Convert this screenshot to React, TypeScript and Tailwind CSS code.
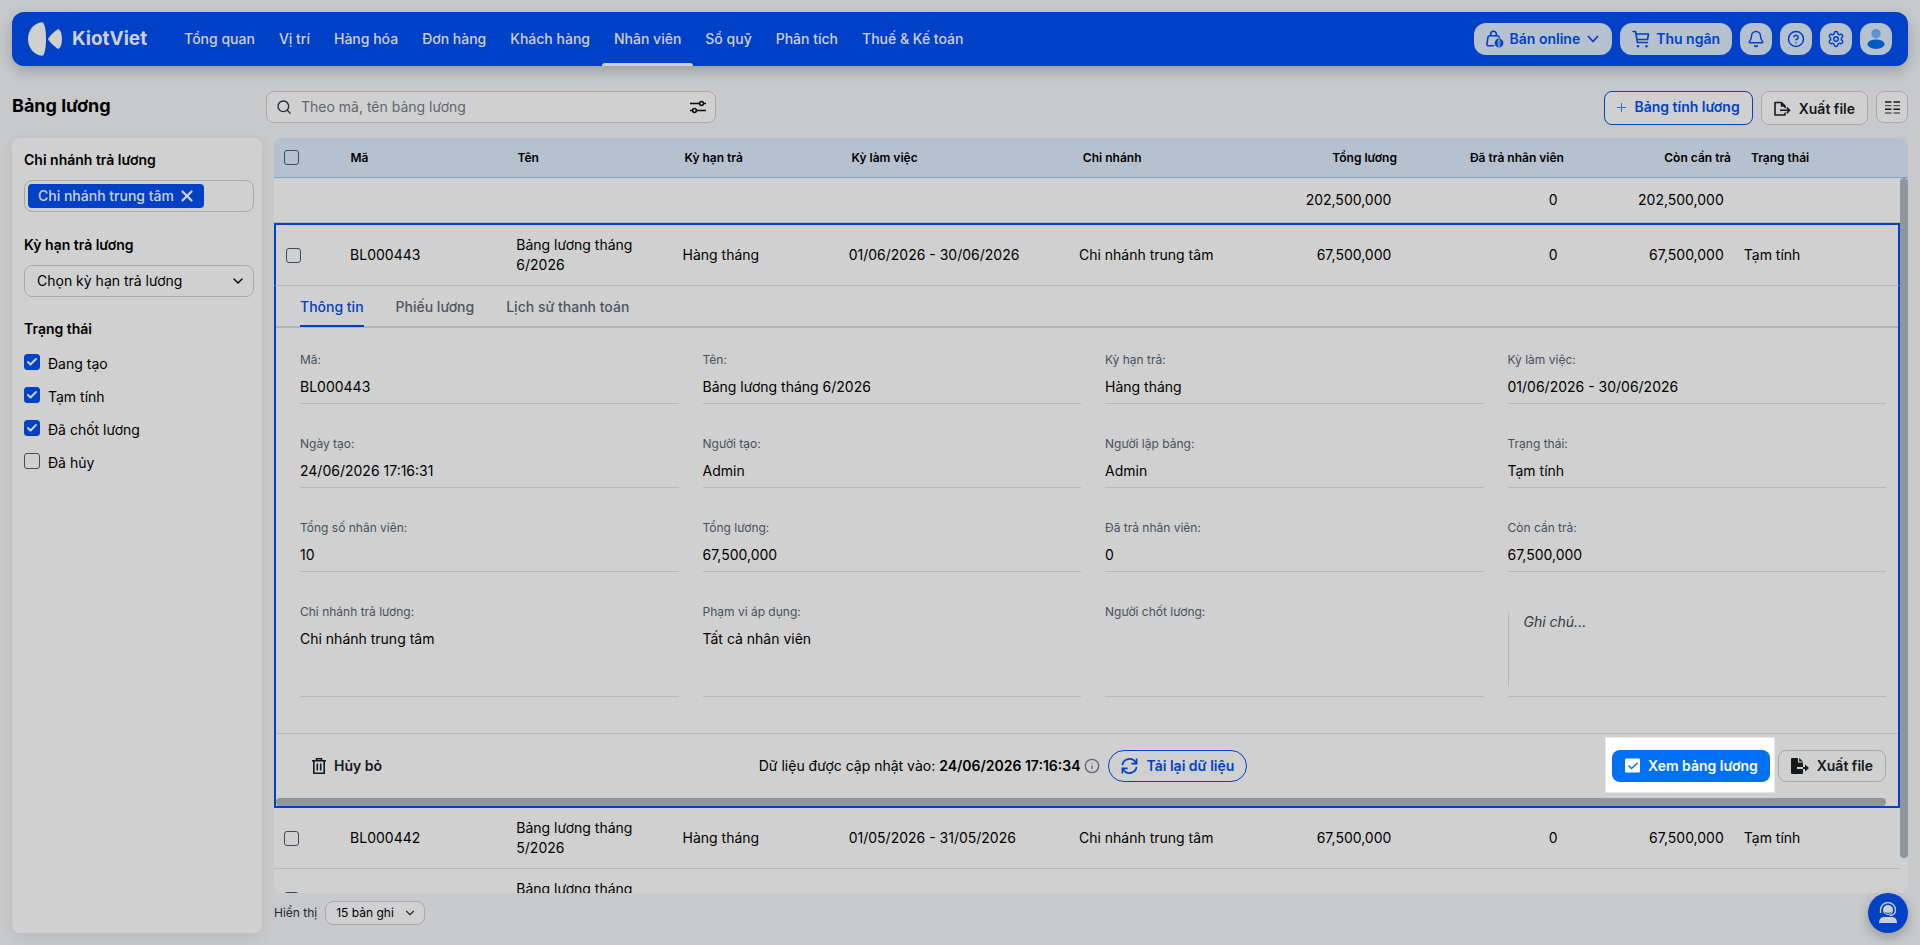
import type { ReactNode } from "react"
import { Bell, Check, ChevronDown, CircleHelp, Info, Search, Settings, X } from "lucide-react"
import clsx from "clsx"

const NAV = [
    "Tổng quan",
    "Vị trí",
    "Hàng hóa",
    "Đơn hàng",
    "Khách hàng",
    "Nhân viên",
    "Sổ quỹ",
    "Phân tích",
    "Thuế & Kế toán",
]

const STATUSES = [
    { label: "Đang tạo", checked: true },
    { label: "Tạm tính", checked: true },
    { label: "Đã chốt lương", checked: true },
    { label: "Đã hủy", checked: false },
]

const COLUMNS = [
    { label: "Mã" },
    { label: "Tên" },
    { label: "Kỳ hạn trả" },
    { label: "Kỳ làm việc" },
    { label: "Chi nhánh" },
    { label: "Tổng lương", right: true },
    { label: "Đã trả nhân viên", right: true },
    { label: "Còn cần trả", right: true },
    { label: "Trạng thái" },
]

const ROWS = [
    ["BL000443", "Bảng lương tháng 6/2026", "Hàng tháng", "01/06/2026 - 30/06/2026", "Chi nhánh trung tâm", "67,500,000", "0", "67,500,000", "Tạm tính"],
    ["BL000442", "Bảng lương tháng 5/2026", "Hàng tháng", "01/05/2026 - 31/05/2026", "Chi nhánh trung tâm", "67,500,000", "0", "67,500,000", "Tạm tính"],
    ["", "Bảng lương tháng 4/2026", "", "", "", "", "", "", ""],
]

const DETAILS = [
    ["Mã:", "BL000443"],
    ["Tên:", "Bảng lương tháng 6/2026"],
    ["Kỳ hạn trả:", "Hàng tháng"],
    ["Kỳ làm việc:", "01/06/2026 - 30/06/2026"],
    ["Ngày tạo:", "24/06/2026 17:16:31"],
    ["Người tạo:", "Admin"],
    ["Người lập bảng:", "Admin"],
    ["Trạng thái:", "Tạm tính"],
    ["Tổng số nhân viên:", "10"],
    ["Tổng lương:", "67,500,000"],
    ["Đã trả nhân viên:", "0"],
    ["Còn cần trả:", "67,500,000"],
    ["Chi nhánh trả lương:", "Chi nhánh trung tâm"],
    ["Phạm vi áp dụng:", "Tất cả nhân viên"],
    ["Người chốt lương:", ""],
]

function Logo() {
    return (
        <a href="#" className="flex items-center gap-[10px]">
            <svg width="34" height="34" viewBox="0 0 34 34" fill="#d0d0d0" aria-hidden="true">
                <path d="M14 .2C16.500 0 18 8 18 17s-1.500 17-4 16.800C6 33 0 26 0 17S6 1 14 .2z" />
                <path d="M30.200 7.200c2 0 3.800 5 3.800 9.800s-1.800 9.800-3.800 9.800C28.500 26.800 20 18.500 20 17s8.500-9.800 10.200-9.800z" />
            </svg>
            <span className="text-[19px] font-bold text-[#d0d0d0]">KiotViet</span>
        </a>
    )
}

function OnlineBagIcon() {
    return (
        <svg width="18" height="18" viewBox="0 0 18 18" fill="none" stroke="currentColor" strokeWidth="1.600" strokeLinecap="round" strokeLinejoin="round" aria-hidden="true">
            <path d="M7.500 15.800H2.600c-1.100 0-1.900-.9-1.700-2L2 7.200C2.200 6.200 2.800 5.700 3.700 5.700h7.800c.9 0 1.500.5 1.700 1.400" />
            <path d="M4.500 5.500C4.500 3 5.500 1.200 7.500 1.200s3 1.800 3 4.300" />
            <circle cx="13" cy="13" r="3.600" fill="currentColor" />
            <path d="M13 9.800c-1.400 2-1.400 4.400 0 6.400M13 9.800c1.400 2 1.400 4.400 0 6.400" stroke="#b5c1ce" strokeWidth="0.900" />
        </svg>
    )
}

function CartIcon() {
    return (
        <svg width="18" height="18" viewBox="0 0 18 18" fill="none" stroke="currentColor" strokeWidth="1.600" strokeLinecap="round" strokeLinejoin="round" aria-hidden="true">
            <path d="M1 1.500h2.500l2 11H15.500M4 4h12.500L15.500 9.500H5" />
            <circle cx="6" cy="16.200" r="1.200" fill="currentColor" stroke="none" />
            <circle cx="14.500" cy="16.200" r="1.200" fill="currentColor" stroke="none" />
        </svg>
    )
}

function SlidersIcon() {
    return (
        <svg width="18" height="14" viewBox="0 0 18 14" fill="none" stroke="#0b0b10" strokeWidth="1.500" aria-hidden="true">
            <path d="M1 3.500h9.500M14.500 3.500H17M1 10.500h2.500M7.500 10.500H17" />
            <circle cx="12.500" cy="3.500" r="1.900" />
            <circle cx="5.500" cy="10.500" r="1.900" />
        </svg>
    )
}

function ExportIcon() {
    return (
        <svg width="17" height="16" viewBox="0 0 17 16" fill="none" stroke="currentColor" strokeWidth="1.600" strokeLinejoin="round" aria-hidden="true">
            <path d="M11 11.800V14H1V1.500h6.500L11 5v2M7.500 1.500V5H11M6 9.300h9.500M12.800 6.500l2.800 2.800-2.800 2.800" />
        </svg>
    )
}

function ExportSolidIcon() {
    return (
        <svg width="18" height="16" viewBox="0 0 18 16" fill="currentColor" aria-hidden="true">
            <path d="M0 1a1 1 0 0 1 1-1h6v4.500h5V9H6v2h6v4a1 1 0 0 1-1 1H1a1 1 0 0 1-1-1zM8.200 0 12 3.500H8.200z" />
            <path d="M12 9h2V6.500l4 3.500-4 3.500V11h-2z" />
        </svg>
    )
}

function ColumnsIcon() {
    return (
        <svg width="15" height="13" viewBox="0 0 15 13" strokeWidth="1.400" aria-hidden="true">
            <path d="M0 1h6.500M8.500 1H15M0 8.300h6.500M8.500 8.300H15" stroke="#14181f" />
            <path d="M0 4.600h6.500M8.500 4.600H15M0 12h6.500M8.500 12H15" stroke="#55595f" />
        </svg>
    )
}

function TrashIcon() {
    return (
        <svg width="14" height="16" viewBox="0 0 14 16" fill="none" stroke="currentColor" strokeWidth="1.600" aria-hidden="true">
            <path d="M0 2.800h14M4.500 2.500v-1.700h5v1.700M1.800 3v12.200h10.400V3M5.300 5.500v7M8.700 5.500v7" />
        </svg>
    )
}

function ReloadIcon() {
    return (
        <svg width="17" height="18" viewBox="0 0 18 18" fill="none" stroke="currentColor" strokeWidth="1.800" aria-hidden="true">
            <path d="M1.500 8A7.500 7.500 0 0 1 15.500 5.500M16.500 1v5.500H11M16.500 10A7.500 7.500 0 0 1 2.500 12.500M1.500 17v-5.500H7" />
        </svg>
    )
}

function SupportIcon() {
    return (
        <svg width="20" height="22" viewBox="0 0 20 22" fill="#d0d0d0" aria-hidden="true">
            <path d="M1 21c0-4 2-6 5.500-6h7c3.500 0 5.500 2 5.500 6z" />
            <circle cx="10" cy="8" r="5" />
            <path d="M2.500 11V8a7.500 7.500 0 0 1 15 0c0 3.500-2 5.500-6 5.500" fill="none" stroke="#d0d0d0" strokeWidth="1.300" />
            <path d="M7 10.500c2 1.200 4 1.200 6 0" fill="none" stroke="#0041c8" strokeWidth="1" />
        </svg>
    )
}

function Checkbox({ label, checked, className = "size-[15px]" }: { label: string; checked?: boolean; className?: string }) {
    return (
        <span className={clsx("relative block shrink-0", className)}>
            <input
                type="checkbox"
                aria-label={label}
                defaultChecked={checked}
                className="peer block size-full appearance-none rounded-[3px] border border-[#3f4a58] checked:border-[#0041c8] checked:bg-[#0041c8]"
            />
            <Check className="pointer-events-none absolute inset-0 m-auto hidden size-3 text-[#d0d0d0] peer-checked:block" strokeWidth={4} />
        </span>
    )
}

function HeaderButton({ label, children }: { label: string; children: ReactNode }) {
    return (
        <button aria-label={label} className="flex size-8 items-center justify-center rounded-xl bg-[#b5c1ce] text-[#0041c8]">
            {children}
        </button>
    )
}

function Header() {
    return (
        <header className="flex h-[54px] shrink-0 items-center rounded-xl bg-[#0041c8] px-4 shadow-[0_5px_14px_rgba(0,0,0,0.22)]">
            <Logo />
            <nav className="ml-[25px] flex h-full">
                {NAV.map((item) => (
                    <a
                        key={item}
                        href="#"
                        className={clsx(
                            "relative flex items-center px-3 text-sm font-medium whitespace-nowrap text-[#d0d0d0]",
                            item === "Nhân viên" && "after:absolute after:inset-x-0 after:bottom-0 after:h-[3px] after:rounded-t-sm after:bg-[#d0d0d0]",
                        )}
                    >
                        {item}
                    </a>
                ))}
            </nav>
            <div className="ml-auto flex gap-2">
                <button className="flex h-8 items-center gap-1.5 rounded-xl bg-[#b5c1ce] px-3 text-sm font-semibold text-[#0041c8]">
                    <OnlineBagIcon />
                    Bán online
                    <svg width="14" height="8" viewBox="0 0 14 8" fill="none" stroke="currentColor" strokeWidth="1.800" aria-hidden="true">
                        <path d="m2 1 5 5.500L12 1" />
                    </svg>
                </button>
                <button className="flex h-8 items-center gap-1.5 rounded-xl bg-[#b5c1ce] px-3 text-sm font-semibold text-[#0041c8]">
                    <CartIcon />
                    Thu ngân
                </button>
                <HeaderButton label="Thông báo">
                    <Bell className="size-[18px]" />
                </HeaderButton>
                <HeaderButton label="Trợ giúp">
                    <CircleHelp className="size-[18px]" />
                </HeaderButton>
                <HeaderButton label="Thiết lập">
                    <Settings className="size-[18px]" />
                </HeaderButton>
                <HeaderButton label="Tài khoản">
                    <svg width="18" height="20" viewBox="0 0 18 20" aria-hidden="true">
                        <circle cx="9" cy="4.700" r="4.700" fill="#5c93d0" />
                        <ellipse cx="9" cy="15.200" rx="8.500" ry="4.800" fill="#005bc7" />
                    </svg>
                </HeaderButton>
            </div>
        </header>
    )
}

function Toolbar() {
    return (
        <div className="mt-[25px] flex h-[34px] shrink-0 items-start">
            <h1 className="w-[254px] text-lg leading-[30px] font-bold">Bảng lương</h1>
            <div className="flex h-8 w-[450px] items-center rounded-lg border border-[#a6a8ab] bg-[#d0d0d0] pr-2 pl-[9px]">
                <Search className="size-4 text-[#1f2937]" />
                <input
                    aria-label="Theo mã, tên bảng lương"
                    placeholder="Theo mã, tên bảng lương"
                    className="ml-[9px] min-w-0 flex-1 text-sm outline-none placeholder:text-[#5e6671]"
                />
                <button aria-label="Bộ lọc">
                    <SlidersIcon />
                </button>
            </div>
            <div className="ml-auto flex items-start gap-2">
                <button className="flex h-[34px] items-center gap-2 rounded-lg border border-[#0041c8] bg-[#d0d0d0] px-3 pb-0.5 text-sm font-semibold text-[#0041c8]">
                    <svg width="9" height="9" viewBox="0 0 9 9" stroke="#2a72cf" aria-hidden="true">
                        <path d="M4.500 0v9M0 4.500h9" />
                    </svg>
                    Bảng tính lương
                </button>
                <button className="flex h-[34px] items-center gap-2 rounded-lg border border-[#a6a8ae] bg-[#d0d0d0] px-3 pt-0.5 text-sm font-semibold text-[#14181f]">
                    <ExportIcon />
                    Xuất file
                </button>
                <button aria-label="Cột hiển thị" className="flex size-8 items-center justify-center rounded-lg border border-[#a6a8ae] bg-[#d0d0d0]">
                    <ColumnsIcon />
                </button>
            </div>
        </div>
    )
}

function Sidebar() {
    return (
        <aside className="w-[250px] shrink-0 rounded-lg bg-[#d0d0d0] pt-3 pr-2 pl-3 shadow-[0_4px_16px_rgba(0,0,0,0.08)]">
            <h2 className="text-sm leading-5 font-semibold">Chi nhánh trả lương</h2>
            <div className="mt-[10px] flex h-8 items-center rounded-lg border border-[#a6a8ae] px-[3px]">
                <span className="flex h-6 items-center gap-1 rounded-sm bg-[#0041c8] pr-2 pl-[10px] text-sm font-medium text-[#d0d0d0]">
                    Chi nhánh trung tâm
                    <button aria-label="Bỏ chọn">
                        <X className="size-[18px]" strokeWidth={3} />
                    </button>
                </span>
            </div>
            <label htmlFor="term" className="mt-[23px] block text-sm leading-5 font-semibold">
                Kỳ hạn trả lương
            </label>
            <div className="relative mt-[10px]">
                <select id="term" className="h-8 w-full appearance-none rounded-lg border border-[#a6a8ae] px-3 text-sm">
                    <option>Chọn kỳ hạn trả lương</option>
                </select>
                <ChevronDown className="pointer-events-none absolute top-2 right-2 size-4" />
            </div>
            <h2 className="mt-[22px] text-sm leading-5 font-semibold">Trạng thái</h2>
            <div className="mt-[15px] flex flex-col gap-[13px]">
                {STATUSES.map((s) => (
                    <label key={s.label} className="flex h-5 items-start gap-2 text-sm">
                        <Checkbox label={s.label} checked={s.checked} className="size-4" />
                        {s.label}
                    </label>
                ))}
            </div>
        </aside>
    )
}

function Cols() {
    return (
        <colgroup>
            <col className="w-[66px]" />
            <col className="w-[166px]" />
            <col className="w-[166px]" />
            <col className="w-[166px]" />
            <col className="w-[230px]" />
            <col className="w-[166px]" />
            <col className="w-[166px]" />
            <col className="w-[166px]" />
            <col className="w-[166px]" />
            <col className="w-[166px]" />
        </colgroup>
    )
}

function PayrollRow({ row, open }: { row: string[]; open?: boolean }) {
    return (
        <tr className="h-[61px]">
            <td className={clsx("border-b border-b-[#b6b7b8] px-[10px]", open && "border-t-2 border-l-2 border-t-[#0041c8] border-l-[#0041c8]")}>
                <Checkbox label={row[1]} />
            </td>
            {row.map((cell, i) => (
                <td
                    key={i}
                    className={clsx(
                        "border-b border-b-[#b6b7b8] px-[10px] py-[10px] leading-5",
                        COLUMNS[i].right && "text-right",
                        open && "border-t-2 border-t-[#0041c8]",
                        open && i === row.length - 1 && "border-r-2 border-r-[#0041c8]",
                    )}
                >
                    {cell}
                </td>
            ))}
        </tr>
    )
}

function Detail() {
    return (
        <>
            <div className="flex h-[42px] gap-8 border-b-2 border-[#b3b4b6] pl-6 font-medium text-[#4b5563]">
                <button className="-mb-px border-b-2 border-[#0041c8] pt-[3px] text-[#0041c8]">Thông tin</button>
                <button className="pt-0.5">Phiếu lương</button>
                <button className="pt-0.5">Lịch sử thanh toán</button>
            </div>
            <div className="grid grid-cols-4 gap-x-6 gap-y-[31px] pt-[23px] pr-3 pb-9 pl-6">
                {DETAILS.map(([label, value], i) => (
                    <div key={label} className={clsx("border-b border-[#b6b7b8] pb-[6px]", i > 11 && "h-[94px]")}>
                        <div className="text-xs leading-[18px] text-[#46505d]">{label}</div>
                        <div className="mt-2 h-5 leading-5">{value}</div>
                    </div>
                ))}
                <div className="border-b border-[#b6b7b8] py-[10px]">
                    <textarea
                        aria-label="Ghi chú"
                        placeholder="Ghi chú..."
                        className="block h-[73px] w-full resize-none border-l border-[#b6b7b8] px-[15px] leading-[18px] italic outline-none placeholder:text-[#2f3a48]"
                    />
                </div>
            </div>
            <div className="flex items-center justify-between border-t border-[#b6b7b8] py-4 pr-3 pl-6">
                <button className="flex h-8 items-center gap-2 px-3 font-semibold text-[#14181f]">
                    <TrashIcon />
                    Hủy bỏ
                </button>
                <div className="flex items-center">
                    <span>
                        Dữ liệu được cập nhật vào: <b className="font-semibold">24/06/2026 17:16:34</b>
                    </span>
                    <Info className="ml-1 size-4 text-[#5e6671]" />
                    <button className="ml-2 flex h-8 items-center gap-2 rounded-full border border-[#0041c8] px-3 font-semibold text-[#0041c8]">
                        <ReloadIcon />
                        Tải lại dữ liệu
                    </button>
                </div>
                <div className="flex gap-2">
                    <div className="relative">
                        <div className="absolute -top-[13px] -right-[5px] -bottom-[11px] -left-[7px] border border-[#e8e8e8] bg-white" />
                        <button className="relative flex h-8 items-center gap-2 rounded-lg bg-[#0070f4] px-3 font-semibold text-white">
                            <svg width="16" height="16" viewBox="0 0 16 16" aria-hidden="true">
                                <rect x="1" y="0.500" width="15" height="14" rx="1" fill="#fff" />
                                <path d="m4.500 7.500 3 3 6-5.500" fill="none" stroke="#0070f4" strokeWidth="1.600" />
                            </svg>
                            Xem bảng lương
                        </button>
                    </div>
                    <button className="flex h-8 items-center gap-2 rounded-lg border border-[#a6a8ae] px-3 font-semibold text-[#14181f]">
                        <ExportSolidIcon />
                        Xuất file
                    </button>
                </div>
            </div>
            <div className="mr-3 h-2 rounded-full bg-[#90969d]" />
        </>
    )
}

function PayrollGrid() {
    return (
        <div className="flex min-h-0 flex-1 flex-col overflow-hidden rounded-lg bg-[#d0d0d0]">
            <table className="w-full table-fixed border-separate border-spacing-0 text-xs">
                <Cols />
                <thead>
                    <tr className="h-10 bg-[#b5c1ce]">
                        <th className="border-b border-[#7f9fce] px-[10px]">
                            <Checkbox label="Chọn tất cả" />
                        </th>
                        {COLUMNS.map((c) => (
                            <th key={c.label} className={clsx("border-b border-[#7f9fce] px-[10px] font-semibold", c.right ? "text-right" : "text-left")}>
                                {c.label}
                            </th>
                        ))}
                    </tr>
                </thead>
            </table>
            <div className="flex min-h-0 flex-1 overflow-hidden">
                <table className="h-fit flex-1 table-fixed border-separate border-spacing-0 text-sm">
                    <Cols />
                    <tbody>
                        <tr className="h-[45px]">
                            <td colSpan={6} className="border-b border-[#b6b7b8]" />
                            <td className="border-b border-[#b6b7b8] px-[10px] text-right">202,500,000</td>
                            <td className="border-b border-[#b6b7b8] px-[10px] text-right">0</td>
                            <td className="border-b border-[#b6b7b8] px-[10px] text-right">202,500,000</td>
                            <td className="border-b border-[#b6b7b8]" />
                        </tr>
                        <PayrollRow row={ROWS[0]} open />
                        <tr>
                            <td colSpan={10} className="border-x-2 border-b-2 border-[#0041c8] p-0">
                                <Detail />
                            </td>
                        </tr>
                        <PayrollRow row={ROWS[1]} />
                        <PayrollRow row={ROWS[2]} />
                    </tbody>
                </table>
                <div className="h-[680px] w-2 shrink-0 rounded-full bg-[#90969d]" />
            </div>
        </div>
    )
}

export default function App() {
    return (
        <div className="flex h-screen flex-col overflow-hidden bg-[#c8c9cb] p-3 font-['Inter',sans-serif] text-black">
            <Header />
            <Toolbar />
            <div className="mt-[13px] flex min-h-0 flex-1 gap-3">
                <Sidebar />
                <main className="flex min-w-0 flex-1 flex-col">
                    <PayrollGrid />
                    <div className="flex h-10 shrink-0 items-center gap-2 text-xs text-[#1f2937]">
                        <label htmlFor="page-size">Hiển thị</label>
                        <div className="relative">
                            <select id="page-size" className="h-6 w-[100px] appearance-none rounded-lg border border-[#a6a8ae] bg-[#d0d0d0] pl-[10px] text-black">
                                <option>15 bản ghi</option>
                            </select>
                            <ChevronDown className="pointer-events-none absolute top-[5px] right-2 size-[14px]" />
                        </div>
                    </div>
                </main>
            </div>
            <button
                aria-label="Hỗ trợ"
                className="fixed right-3 bottom-3 flex size-10 items-center justify-center rounded-full bg-[#0041c8] shadow-[0_4px_12px_rgba(0,0,0,0.25)]"
            >
                <SupportIcon />
            </button>
        </div>
    )
}
